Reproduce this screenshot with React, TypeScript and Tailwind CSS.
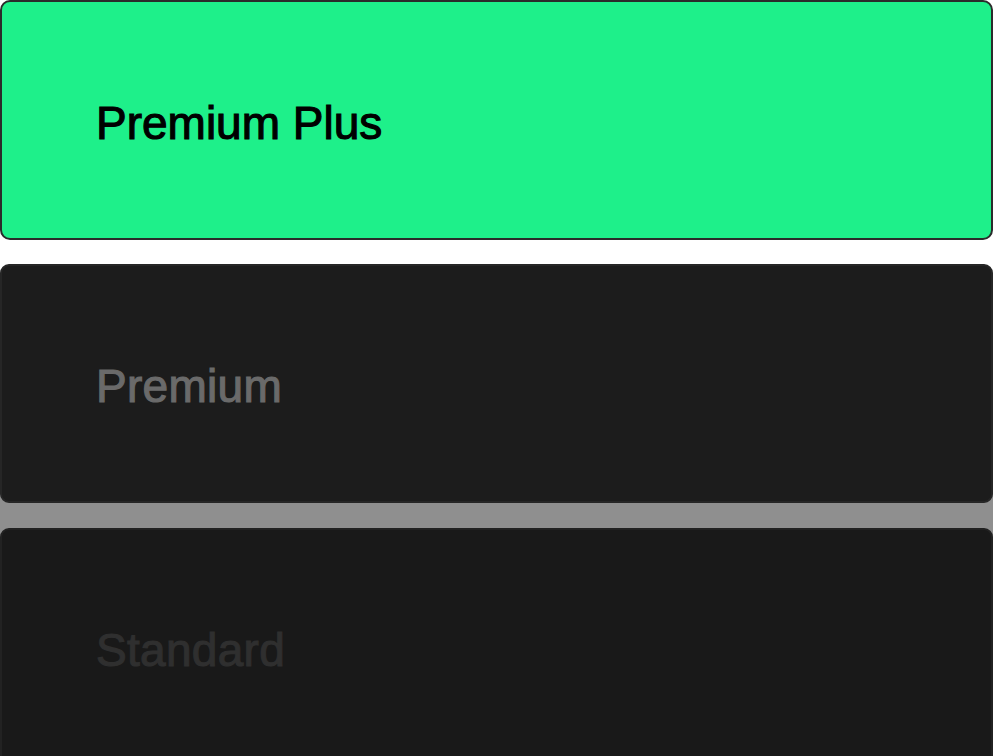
import React from "react";

const tiers = [
  { name: "Premium", card: "bg-[#1c1c1c] border-[#262626]", text: "text-[#6a6a6a]" },
  { name: "Standard", card: "bg-[#191919] border-[#222222]", text: "text-[#2f2f2f]" },
];

export default function App() {
  return (
    <div
      className="h-[756px] w-[993px] overflow-hidden bg-white"
      style={{ fontFamily: '"Liberation Sans", Arial, sans-serif' }}
    >
      {/* Selected tier */}
      <div className="flex h-[240px] items-center rounded-[10px] border-2 border-[#2b2b2b] bg-[#1ef08a] pl-[94px] pt-[6px]">
        <span className="text-[46px] leading-none text-black [-webkit-text-stroke:1.1px_currentcolor]">
          Premium Plus
        </span>
      </div>

      {/* Other tiers */}
      <div className="mt-[24px] flex flex-col gap-[25px] bg-[linear-gradient(to_bottom,#ffffff_225px,#8f8f8f_225px)]">
        {tiers.map((t) => (
          <div
            key={t.name}
            className={`flex h-[239px] shrink-0 items-center rounded-[9px] border-2 pl-[94px] pt-[5px] ${t.card}`}
          >
            <span
              className={`text-[46px] leading-none tracking-[0.3px] [-webkit-text-stroke:1.1px_currentcolor] ${t.text}`}
            >
              {t.name}
            </span>
          </div>
        ))}
      </div>
    </div>
  );
}
